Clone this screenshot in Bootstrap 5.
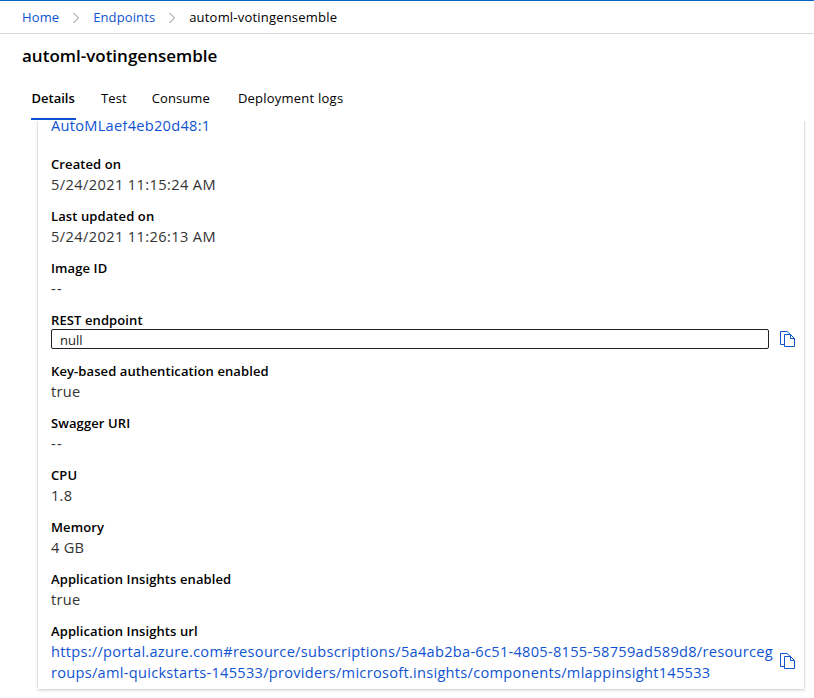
<!DOCTYPE html>
<html lang="en">
<head>
<meta charset="utf-8">
<meta name="viewport" content="width=device-width, initial-scale=1">
<title>automl-votingensemble</title>
<link href="https://cdn.jsdelivr.net/npm/bootstrap@5.3.0/dist/css/bootstrap.min.css" rel="stylesheet">
<style>
body{font-family:"Open Sans","Noto Sans",sans-serif;font-size:13px;color:#000;height:698px}
a{color:#0f53d1}
.crumbs{height:34px;border-top:1px solid #0067c5;border-bottom:1px solid #d6d6d6;padding:1px 0 0 22px}
.crumbs a{letter-spacing:.11px}
.crumbs .current{letter-spacing:.2px}
.crumbs svg{margin:0 13px}
.title{font-size:17px;font-weight:600;line-height:24px;padding:10px 0 0 22px;height:44px}
.tabs{height:43px;padding-left:31px;line-height:20px;gap:25px}
.tabs a{color:#000;height:42px;padding:10px 0 0;letter-spacing:.1px}
.tabs a.active{font-weight:600;width:45px;padding-left:.5px;letter-spacing:0;border-bottom:2px solid #0f53d1}
.tabs a:last-child{margin-left:3px;letter-spacing:.23px}
.pane{height:577px;padding:0 10px 0 38px}
.panel{height:579px;margin-top:-11px!important;padding:5px 8px 0 13px;box-shadow:0 1px 3px rgba(60,40,60,.24),0 0 1px rgba(60,40,60,.22)}
.field{height:52px}
.field dt{font-weight:600;line-height:20px;height:20px;letter-spacing:.1px}
.field dd,.model{font-size:14.6px;line-height:21px;color:#333;letter-spacing:.28px}
.model{height:39px}
.field .date{letter-spacing:.39px}
.field .dash{letter-spacing:1.3px}
.rest{height:51px}
.rest dt{height:19px}
.rest dd{height:20px}
.rest input{height:20px;width:718px;border:1px solid #222;border-radius:2px;padding:2px 8px 0;font-size:13px;color:#222}
.copy{margin:1px 0 0 11px;flex:none}
.url a{width:729px;flex:none}
.url svg{margin:0 0 2px}
</style>
</head>
<body class="bg-white overflow-hidden">
<nav class="crumbs d-flex align-items-center" aria-label="breadcrumb">
<a class="text-decoration-none" href="#">Home</a>
<svg width="8" height="12" fill="none" stroke="#888"><path d="M1.5 1l5 5-5 5"/></svg>
<a class="text-decoration-none" href="#">Endpoints</a>
<svg width="8" height="12" fill="none" stroke="#888"><path d="M1.5 1l5 5-5 5"/></svg>
<span class="current">automl-votingensemble</span>
</nav>
<h1 class="title m-0">automl-votingensemble</h1>
<nav class="tabs d-flex">
<a class="active text-decoration-none" href="#">Details</a>
<a class="text-decoration-none" href="#">Test</a>
<a class="text-decoration-none" href="#">Consume</a>
<a class="text-decoration-none" href="#">Deployment logs</a>
</nav>
<main class="pane overflow-hidden">
<dl class="panel m-0">
<div class="model"><a class="text-decoration-none" href="#">AutoMLaef4eb20d48:1</a></div>
<div class="field"><dt>Created on</dt><dd class="date m-0">5/24/2021 11:15:24 AM</dd></div>
<div class="field"><dt>Last updated on</dt><dd class="date m-0">5/24/2021 11:26:13 AM</dd></div>
<div class="field"><dt>Image ID</dt><dd class="dash m-0">--</dd></div>
<div class="field rest"><dt>REST endpoint</dt><dd class="m-0 d-flex"><input value="null" readonly aria-label="REST endpoint">
<svg class="copy" width="16" height="18" viewBox="0 0 16 18" fill="none" stroke="#0f53d1"><path d="M4.500 14.500h-4v-13h6.500l3.500 3M4.500 4.500h6l4 4v8h-10zM10.500 4.500v4h4"/></svg></dd></div>
<div class="field"><dt>Key-based authentication enabled</dt><dd class="m-0">true</dd></div>
<div class="field"><dt>Swagger URI</dt><dd class="dash m-0">--</dd></div>
<div class="field"><dt>CPU</dt><dd class="m-0">1.8</dd></div>
<div class="field"><dt>Memory</dt><dd class="m-0">4 GB</dd></div>
<div class="field"><dt>Application Insights enabled</dt><dd class="m-0">true</dd></div>
<div class="field url"><dt>Application Insights url</dt><dd class="m-0 d-flex align-items-center text-nowrap"><a class="text-decoration-none" href="#">https://portal.azure.com#resource/subscriptions/5a4ab2ba-6c51-4805-8155-58759ad589d8/resourceg<br>roups/aml-quickstarts-145533/providers/microsoft.insights/components/mlappinsight145533</a>
<svg class="copy" width="16" height="18" viewBox="0 0 16 18" fill="none" stroke="#0f53d1"><path d="M4.500 14.500h-4v-13h6.500l3.500 3M4.500 4.500h6l4 4v8h-10zM10.500 4.500v4h4"/></svg></dd></div>
</dl>
</main>
<script src="https://cdn.jsdelivr.net/npm/bootstrap@5.3.0/dist/js/bootstrap.bundle.min.js"></script>
</body>
</html>
